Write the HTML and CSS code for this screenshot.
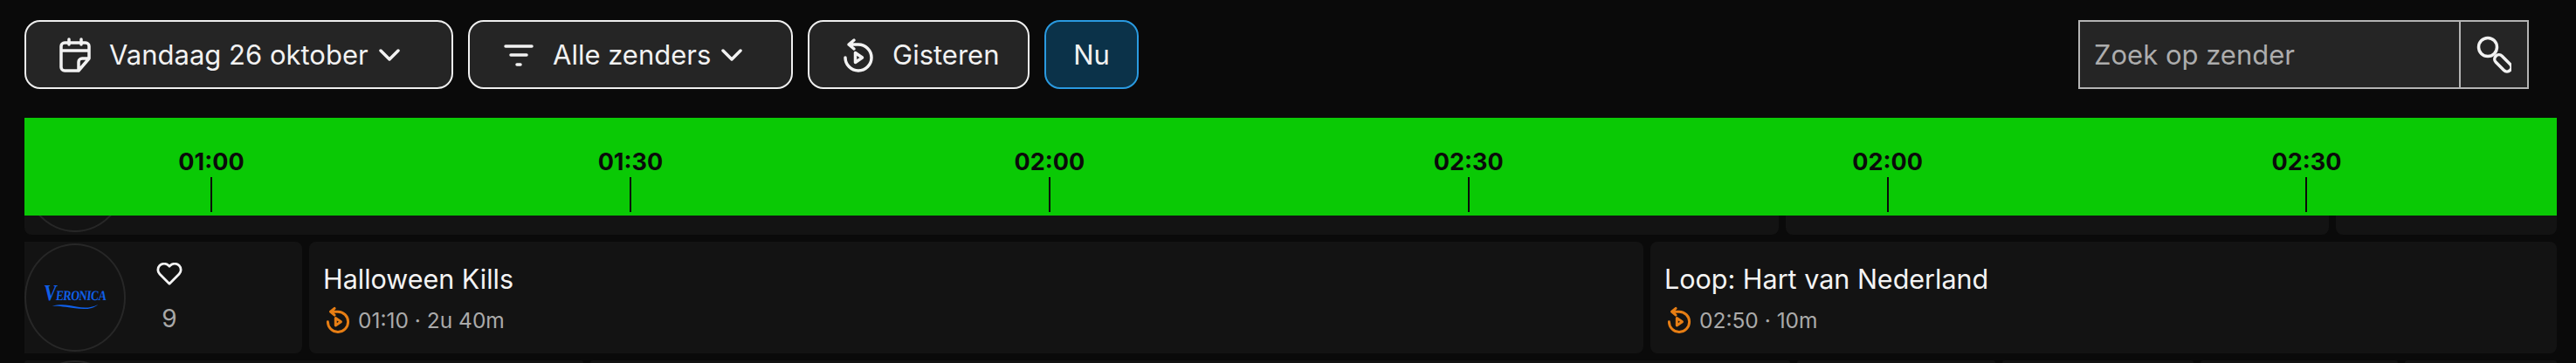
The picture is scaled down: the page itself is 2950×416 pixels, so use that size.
FILE: index.html
```html
<!DOCTYPE html>
<html lang="nl">
<head>
    <meta charset="UTF-8">
    <title>TV gids</title>
    <link rel="stylesheet" href="styles.css">
</head>
<body>
    <div class="toolbar">
        <button class="tool-button btn-date">
            <svg class="tool-icon" viewBox="0 0 36 40"><path d="M11 2v6M25 2v6M2 15h32M34 24V10a4 4 0 0 0-4-4H6a4 4 0 0 0-4 4v24a4 4 0 0 0 4 4h16zM34 24H26a4 4 0 0 0-4 4v10"/></svg>
            <span>Vandaag 26 oktober</span>
            <svg class="chevron" viewBox="0 0 24 14"><path d="M2 2l10 10L22 2"/></svg>
        </button>
        <button class="tool-button btn-channels">
            <svg class="tool-icon" viewBox="0 0 36 40"><path d="M3 10h30M9 20h18M16 31h4"/></svg>
            <span>Alle zenders</span>
            <svg class="chevron" viewBox="0 0 24 14"><path d="M2 2l10 10L22 2"/></svg>
        </button>
        <button class="tool-button btn-yesterday">
            <svg class="tool-icon" viewBox="0 0 36 40"><path d="M3 23a15 15 0 1 0 15-15H7M13 3L7 8l6 5M14.500 17.500v11l8-5.500z"/></svg>
            <span>Gisteren</span>
        </button>
        <button class="tool-button now-button">Nu</button>
        <div class="search">
            <input class="search-input" type="text" placeholder="Zoek op zender">
            <button class="search-button">
                <svg viewBox="0 0 40 44"><circle cx="13" cy="13" r="10.500"/><rect x="25" y="20" width="10" height="23" rx="5" transform="rotate(-45 30 31)"/></svg>
            </button>
        </div>
    </div>

    <div class="timeline">
        <div class="time-mark"><span>01:00</span><i></i></div>
        <div class="time-mark"><span>01:30</span><i></i></div>
        <div class="time-mark"><span>02:00</span><i></i></div>
        <div class="time-mark"><span>02:30</span><i></i></div>
        <div class="time-mark"><span>02:00</span><i></i></div>
        <div class="time-mark"><span>02:30</span><i></i></div>
    </div>

    <div class="row row-cut-top">
        <div class="cell cell-main"><div class="logo-ring"></div></div>
        <div class="cell cell-tail-a"></div>
        <div class="cell cell-tail-b"></div>
    </div>

    <div class="row row-full">
        <div class="cell channel">
            <div class="logo-ring">
                <div class="logo">
                    <span class="logo-text"><b>V</b>ERONICA</span>
                    <svg class="logo-wave" viewBox="0 0 60 8"><path d="M0 3C12 0 22 2 32 4S50 6 60 1C54 7 42 8 30 6S10 3 0 3z"/></svg>
                </div>
            </div>
            <div class="channel-fav">
                <svg class="heart" viewBox="0 0 32 28"><path d="M16 26L4 14a7.500 7.500 0 0 1 0-10.500 8 8 0 0 1 11 0l1 1 1-1a8 8 0 0 1 11 0 7.500 7.500 0 0 1 0 10.500z"/></svg>
                <span class="fav-number">9</span>
            </div>
        </div>
        <div class="cell program program-long">
            <div class="program-title">Halloween Kills</div>
            <div class="program-meta">
                <svg class="replay" viewBox="0 0 36 40"><path d="M3 23a15 15 0 1 0 15-15H7M13 3L7 8l6 5M14.500 17.500v11l8-5.500z"/></svg>
                <span>01:10 · 2u 40m</span>
            </div>
        </div>
        <div class="cell program program-rest">
            <div class="program-title">Loop: Hart van Nederland</div>
            <div class="program-meta">
                <svg class="replay" viewBox="0 0 36 40"><path d="M3 23a15 15 0 1 0 15-15H7M13 3L7 8l6 5M14.500 17.500v11l8-5.500z"/></svg>
                <span>02:50 · 10m</span>
            </div>
        </div>
    </div>

    <div class="row row-cut-bottom">
        <div class="cell cell-next-a"><div class="logo-ring"></div></div>
        <div class="cell cell-next-b"></div>
        <div class="cell cell-next-c"></div>
        <div class="cell cell-next-d"></div>
        <div class="cell cell-next-e"></div>
        <div class="cell cell-next-f"></div>
    </div>
</body>
</html>
```

FILE: styles.css
```css
* {
    box-sizing: border-box;
}
html, body {
    height: 416px;
    overflow: hidden;
}
body {
    margin: 0;
    padding: 23px 22px 0 28px;
    background-color: #0a0a0a;
    color: white;
    font-family: "Inter", "Liberation Sans", sans-serif;
}

/* toolbar */
.toolbar {
    display: flex;
    gap: 17px;
    height: 79px;
    margin-bottom: 33px;
    padding-right: 32px;
}
.tool-button {
    display: flex;
    align-items: center;
    height: 79px;
    padding: 0;
    background-color: #252525;
    border: 2px solid #efefef;
    border-radius: 18px;
    color: #f2f2f2;
    font-family: inherit;
    font-size: 31px;
}
.btn-date {
    width: 491px;
    padding-left: 38px;
}
.btn-channels {
    width: 372px;
    padding-left: 38px;
}
.btn-yesterday {
    width: 254px;
    padding-left: 38px;
}
.tool-icon {
    width: 36px;
    height: 40px;
    margin-right: 21px;
    fill: none;
    stroke: #f2f2f2;
    stroke-width: 3.500;
    stroke-linecap: round;
    stroke-linejoin: round;
}
.chevron {
    width: 24px;
    height: 14px;
    margin-left: 12px;
    fill: none;
    stroke: #f2f2f2;
    stroke-width: 3.500;
    stroke-linecap: round;
    stroke-linejoin: round;
}
.now-button {
    justify-content: center;
    width: 108px;
    background-color: #0b3249;
    border-color: #2a9ae0;
}
.search {
    display: flex;
    width: 516px;
    height: 79px;
    margin-left: auto;
    background-color: #252525;
    border: 2px solid #b4b4b4;
}
.search-input {
    flex: 1;
    min-width: 0;
    padding: 0 0 0 16px;
    background: none;
    border: none;
    border-right: 2px solid #b4b4b4;
    outline: none;
    color: #ddd;
    font-family: inherit;
    font-size: 31px;
}
.search-input::placeholder {
    color: #adadad;
    opacity: 1;
}
.search-button {
    display: flex;
    align-items: center;
    justify-content: center;
    width: 76px;
    padding: 0;
    background: none;
    border: none;
}
.search-button svg {
    width: 40px;
    height: 44px;
    fill: none;
    stroke: #f2f2f2;
    stroke-width: 3.500;
    stroke-linejoin: round;
}

/* timeline */
.timeline {
    display: flex;
    gap: 359.900px;
    height: 112px;
    padding: 0 0 4px 154px;
    background-color: #0ac905;
}
.time-mark {
    display: flex;
    flex: 0 0 120px;
    flex-direction: column;
    align-items: center;
    justify-content: flex-end;
    color: #0a0a0a;
    font-size: 27px;
    font-weight: 700;
}
.time-mark span {
    line-height: 32px;
    margin-bottom: 1px;
}
.time-mark i {
    width: 2px;
    height: 40px;
    background-color: #0a0a0a;
}

/* rows */
.row {
    display: flex;
    gap: 8px;
    margin-bottom: 8px;
    overflow: hidden;
}
.cell {
    flex: none;
    background-color: #131313;
    border-radius: 8px;
}
.row-cut-top {
    align-items: flex-end;
    height: 22px;
}
.row-cut-top .cell {
    height: 22px;
    border-radius: 0 0 8px 8px;
    overflow: hidden;
}
.row-cut-top .logo-ring {
    margin-top: -105px;
}
.cell-main {
    width: 2009px;
    display: flex;
    align-items: flex-start;
}
.cell-tail-a {
    width: 622px;
}
.cell-tail-b {
    width: 253px;
}
.row-full {
    height: 128px;
}
.channel {
    display: flex;
    align-items: center;
    width: 318px;
    border-radius: 0 8px 8px 0;
}
.logo-ring {
    display: flex;
    flex: none;
    align-items: center;
    justify-content: center;
    width: 116px;
    height: 124px;
    border: 2px solid #272727;
    border-radius: 50%;
}
.logo {
    display: flex;
    flex-direction: column;
    align-items: center;
    color: #0f5fe8;
}
.logo-text {
    font-family: "Liberation Serif", serif;
    font-size: 16px;
    font-weight: 700;
    line-height: 18px;
    letter-spacing: -0.6px;
    white-space: nowrap;
    transform: skewX(-6deg) scaleX(0.8);
}
.logo-text b {
    font-size: 26px;
}
.logo-wave {
    width: 54px;
    height: 7px;
    margin-top: 0;
    fill: #0f5fe8;
}
.channel-fav {
    display: flex;
    flex-direction: column;
    align-items: center;
    width: 30px;
    margin-left: 35px;
}
.heart {
    width: 30px;
    height: 26px;
    margin-bottom: 22px;
    fill: none;
    stroke: #f4f4f4;
    stroke-width: 3;
    stroke-linejoin: round;
}
.fav-number {
    color: #a8a8a8;
    font-size: 28px;
    line-height: 32px;
}
.program {
    display: flex;
    flex-direction: column;
    padding: 23px 16px 0;
}
.program-long {
    width: 1528px;
}
.program-rest {
    width: 1038px;
}
.program-title {
    color: #f4f4f4;
    font-size: 30.500px;
    line-height: 40px;
}
.program-meta {
    display: flex;
    align-items: center;
    margin-top: 11px;
    color: #aaaaaa;
    font-size: 24.500px;
}
.replay {
    width: 28px;
    height: 31px;
    margin: 0 9px 0 3px;
    fill: none;
    stroke: #e77e14;
    stroke-width: 3.800;
    stroke-linecap: round;
    stroke-linejoin: round;
}
.row-cut-bottom {
    height: 3px;
    margin: 0;
}
.row-cut-bottom .cell {
    height: 3px;
    border-radius: 8px 8px 0 0;
    overflow: hidden;
}
.cell-next-a {
    width: 640px;
    display: flex;
}
.cell-next-b {
    width: 1374px;
}
.cell-next-c {
    width: 227px;
}
.cell-next-d {
    width: 219px;
}
.cell-next-e {
    width: 226px;
}
.cell-next-f {
    width: 174px;
}
```
